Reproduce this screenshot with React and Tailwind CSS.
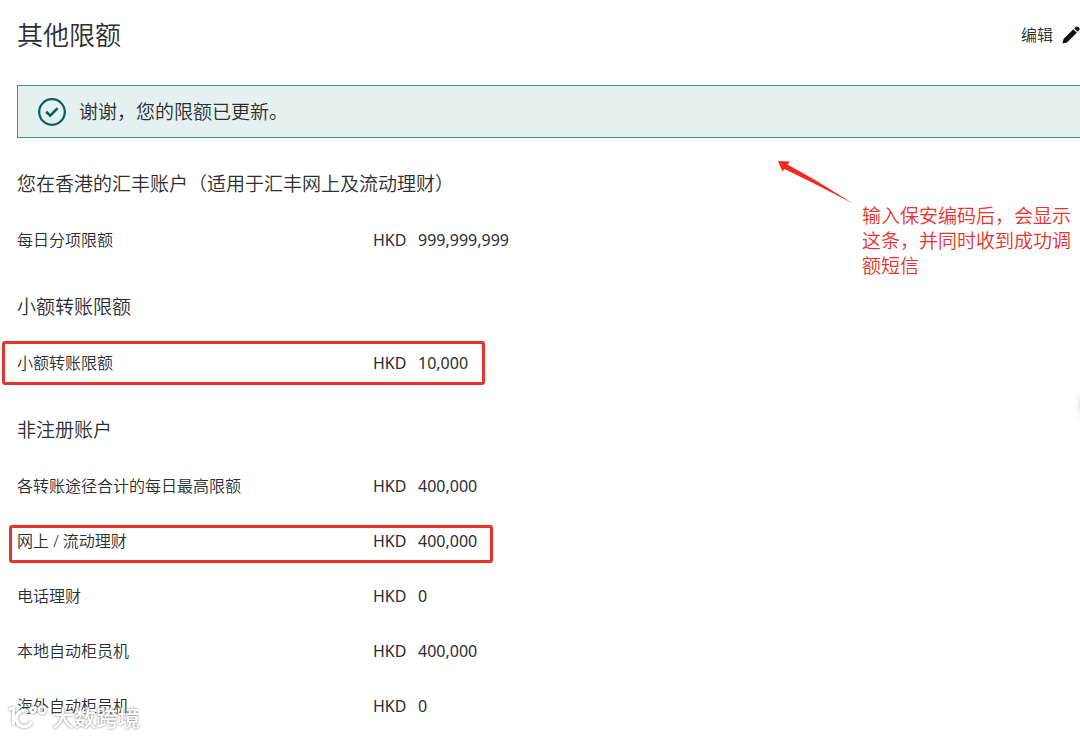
const sections = [
  {
    title: '您在香港的汇丰账户（适用于汇丰网上及流动理财）',
    rows: [{ label: '每日分项限额', amount: '999,999,999' }],
  },
  {
    title: '小额转账限额',
    rows: [
      {
        label: '小额转账限额',
        amount: '10,000',
        mark: 'left-[2px] top-[6px] w-[483px] h-[44px]',
      },
    ],
  },
  {
    title: '非注册账户',
    rows: [
      { label: '各转账途径合计的每日最高限额', amount: '400,000' },
      {
        label: '网上 / 流动理财',
        amount: '400,000',
        mark: 'left-[9px] top-[12px] w-[484px] h-[38px]',
      },
      { label: '电话理财', amount: '0' },
      { label: '本地自动柜员机', amount: '400,000' },
      { label: '海外自动柜员机', amount: '0' },
    ],
  },
];

function LimitSection({ title, rows }) {
  return (
    <section>
      <h2 className="mb-[14px] pl-[17px] text-[19px] leading-7">{title}</h2>
      <table className="w-full table-fixed border-collapse text-left">
        <tbody>
          {rows.map((row) => (
            <tr key={row.label} className="relative h-[55px]">
              <th scope="row" className="w-[373px] p-0 pl-[17px] font-[350]">
                {row.label}
                {row.mark && (
                  <span
                    aria-hidden="true"
                    className={'absolute rounded-[3px] border-[3px] border-[#e8322a] ' + row.mark}
                  />
                )}
              </th>
              <td className="p-0 font-normal">
                <span className="inline-block w-[45px]">HKD</span>
                {row.amount}
              </td>
            </tr>
          ))}
        </tbody>
      </table>
    </section>
  );
}

export default function App() {
  return (
    <main
      className="relative overflow-hidden bg-white pb-[3px] text-[16px] leading-6 font-[350] text-[#2b2d30]"
      style={{ fontFamily: '"Noto Sans", "Noto Sans CJK SC", sans-serif' }}
    >
      <header className="flex items-center justify-between pt-[15px] pl-[17px]">
        <h1 className="text-[26px] leading-10">其他限额</h1>
        <button type="button" className="flex items-center gap-[9px]">
          编辑
          <svg width="18" height="18" viewBox="0 0 18 18" fill="#111" aria-hidden="true">
            <path d="M0.5 17.5 1.5 13 11.3 3.2 14.8 6.7 5 16.5Z" />
            <path d="M12.2 2.4 13.6 1Q15 -.2 16.2 1L17 1.8Q18.2 3 17 4.4L15.6 5.8Z" />
          </svg>
        </button>
      </header>

      <div
        role="status"
        className="mt-[30px] mb-8 ml-[17px] flex h-[53px] items-center gap-3 border border-r-0 border-[#3a9790] bg-[#e4f1f0] pl-[19px] text-[19px]"
      >
        <svg width="30" height="30" viewBox="0 0 30 30" fill="none" stroke="#0a5f58" aria-hidden="true">
          <circle cx="15" cy="15" r="12.8" strokeWidth="2.2" />
          <path d="M9.2 14.7 13.2 18.6 20.6 11.2" strokeWidth="2.6" />
        </svg>
        <p>谢谢，您的限额已更新。</p>
      </div>

      <div className="flex flex-col gap-[26px]">
        {sections.map((section) => (
          <LimitSection key={section.title} {...section} />
        ))}
      </div>

      <svg
        className="absolute top-[159px] right-[226px]"
        width="78"
        height="46"
        viewBox="0 0 78 46"
        fill="#f52a1c"
        aria-hidden="true"
      >
        <path d="M2 2 14 2.5 11.5 5.5 39 21 77 44.5 36 23.5 8.5 10 6.5 12.5Z" />
      </svg>
      <p className="absolute top-[204px] right-[9px] w-[209px] text-[19px] leading-[25px] text-[#e8322a]">
        输入保安编码后，会显示这条，并同时收到成功调额短信
      </p>

      <span
        aria-hidden="true"
        className="absolute top-[392px] -right-[27px] size-7 rounded-full bg-[#dce9f1] shadow-[0_0_8px_#00000020]"
      />

      <div className="absolute bottom-[5px] left-[8px] flex items-center gap-[4px] text-[22px] leading-7 font-medium text-white drop-shadow-[0_0_1px_#777777]">
        <svg width="40" height="28" viewBox="0 0 40 28" fill="none" stroke="#fff" aria-hidden="true">
          <path d="M1 6.5 5.5 5V22" strokeWidth="3" />
          <path d="M20 8.5A8 8 0 1 0 23.5 19" strokeWidth="3.5" />
          <circle cx="25" cy="7" r="2.5" strokeWidth="2.5" />
          <circle cx="34" cy="7" r="3.5" strokeWidth="2.5" />
        </svg>
        大数跨境
      </div>
    </main>
  );
}
